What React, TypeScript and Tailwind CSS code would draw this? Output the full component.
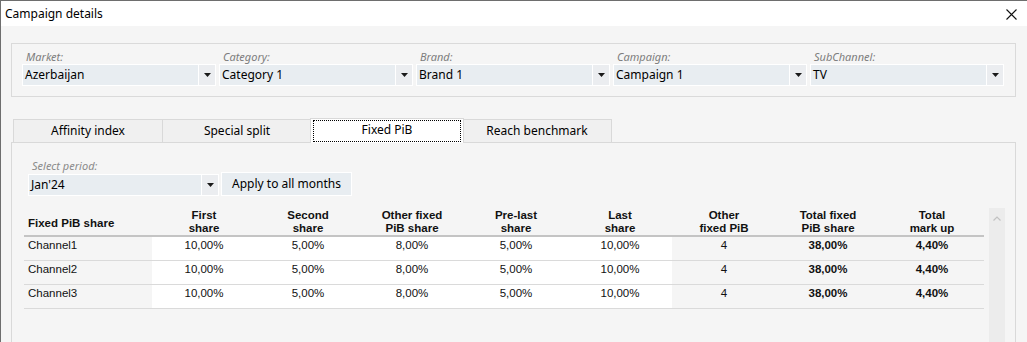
const filters = [
  { label: 'Market:', value: 'Azerbaijan' },
  { label: 'Category:', value: 'Category 1' },
  { label: 'Brand:', value: 'Brand 1' },
  { label: 'Campaign:', value: 'Campaign 1' },
  { label: 'SubChannel:', value: 'TV' },
];

const tabs = ['Affinity index', 'Special split', 'Fixed PiB', 'Reach benchmark'];

const headers = [
  ['First', 'share'],
  ['Second', 'share'],
  ['Other fixed', 'PiB share'],
  ['Pre-last', 'share'],
  ['Last', 'share'],
  ['Other', 'fixed PiB'],
  ['Total fixed', 'PiB share'],
  ['Total', 'mark up'],
];

const rows = ['Channel1', 'Channel2', 'Channel3'];
const values = ['10,00%', '5,00%', '8,00%', '5,00%', '10,00%'];

function Arrow() {
  return (
    <svg width="7" height="4" viewBox="0 0 7 4" className="block">
      <polygon points="0,0 7,0 3.5,4" fill="#1a1a1a" />
    </svg>
  );
}

function Combo({ value }: { value: string }) {
  return (
    <div className="flex h-[22px]">
      <div className="flex-1 flex items-center bg-[#e8edf1] border border-white pl-[2px] text-[12px] text-black">
        {value}
      </div>
      <div className="w-[17px] flex items-center justify-center bg-[#ebedf0] border border-white border-l-0">
        <Arrow />
      </div>
    </div>
  );
}

export default function App() {
  return (
    <div className="w-[1027px] h-[342px] overflow-hidden bg-[#f5f5f5] border-t border-l border-[#6e6e6e] font-['Noto_Sans',sans-serif] text-black">
      {/* Title bar */}
      <div className="h-[25px] bg-white flex items-center justify-between pl-[4px] pr-[10px]">
        <span className="text-[12px]">Campaign details</span>
        <svg width="11" height="11" viewBox="0 0 11 11" className="mt-[1px]">
          <path d="M0.5 0.5 L10.5 10.5 M10.5 0.5 L0.5 10.5" stroke="#111" strokeWidth="1.1" fill="none" />
        </svg>
      </div>

      <div className="pl-[10px] pr-[11px] pt-[17px]">
        {/* Filters group */}
        <div className="border border-[#dadada] h-[54px] pl-[10px] pr-[11px] pt-[6px] grid grid-cols-5 gap-x-[3px]">
          {filters.map((f) => (
            <div key={f.label}>
              <div className="h-[14px] pl-[4px] text-[11px] leading-[13px] italic text-[#7d7d7d]">{f.label}</div>
              <Combo value={f.value} />
            </div>
          ))}
        </div>

        {/* Tabs */}
        <div className="flex items-end pl-[2px] mt-[21px] h-[24px]">
          {tabs.map((t, i) =>
            i === 2 ? (
              <div
                key={t}
                className="relative z-10 w-[154px] h-[25px] -mx-[2px] -mb-px bg-white border border-b-0 border-[#d9d9d9] text-[12px] flex justify-center pt-[2px]"
              >
                <div className="absolute left-[2px] right-[2px] top-[1px] bottom-[1px] border border-dotted border-black" />
                {t}
              </div>
            ) : (
              <div
                key={t}
                className={`w-[150px] h-[23px] bg-[#f0f0f0] border border-b-0 border-[#d9d9d9] text-[12px] flex items-center justify-center ${i === 1 ? '-ml-px' : ''}`}
              >
                {t}
              </div>
            )
          )}
        </div>

        {/* Tab panel */}
        <div className="border border-[#d9d9d9] h-[220px] bg-[#f5f5f5]">
          <div className="pl-[16px] pt-[15px]">
            <div className="h-[15px] pl-[4px] text-[11px] leading-[15px] italic text-[#8a8a8a]">Select period:</div>
            <div className="flex items-center">
              <div className="w-[191px]">
                <Combo value="Jan'24" />
              </div>
              <div className="ml-[2px] w-[131px] h-[24px] -mt-[1px] bg-[#e8edf1] border border-white flex items-center justify-center text-[12px]">
                Apply to all months
              </div>
            </div>
          </div>

          <div className="flex pl-[12px] mt-[13px] font-['Liberation_Sans',Arial,sans-serif] text-[11.5px] text-[#111]">
            {/* Table */}
            <div className="w-[960px]">
              <div className="grid grid-cols-[128px_repeat(8,104px)] h-[28px] border-b-2 border-[#c4c4c4] font-bold leading-[13px]">
                <div className="flex items-center pl-[4px] pt-[2px]">Fixed PiB share</div>
                {headers.map((h) => (
                  <div key={h[0] + h[1]} className="text-center">
                    <div>{h[0]}</div>
                    <div>{h[1]}</div>
                  </div>
                ))}
              </div>
              {rows.map((r) => (
                <div key={r} className="grid grid-cols-[128px_repeat(8,104px)] h-[24px] border-b border-[#dadada] leading-[14px]">
                  <div className="pl-[4px] pt-[1px]">{r}</div>
                  {values.map((v, i) => (
                    <div key={i} className="bg-white text-center pt-[1px]">{v}</div>
                  ))}
                  <div className="text-center pt-[1px]">4</div>
                  <div className="text-center pt-[1px] font-bold">38,00%</div>
                  <div className="text-center pt-[1px] font-bold">4,40%</div>
                </div>
              ))}
            </div>

            {/* Scrollbar */}
            <div className="ml-[5px] -mt-[1px] w-[16px] h-[140px] bg-[#ececec] flex justify-center pt-[8px]">
              <svg width="8" height="5" viewBox="0 0 8 5">
                <polyline points="0.5,4.5 4,1 7.5,4.5" fill="none" stroke="#c2c2c2" strokeWidth="1.2" />
              </svg>
            </div>
          </div>
        </div>
      </div>
    </div>
  );
}
